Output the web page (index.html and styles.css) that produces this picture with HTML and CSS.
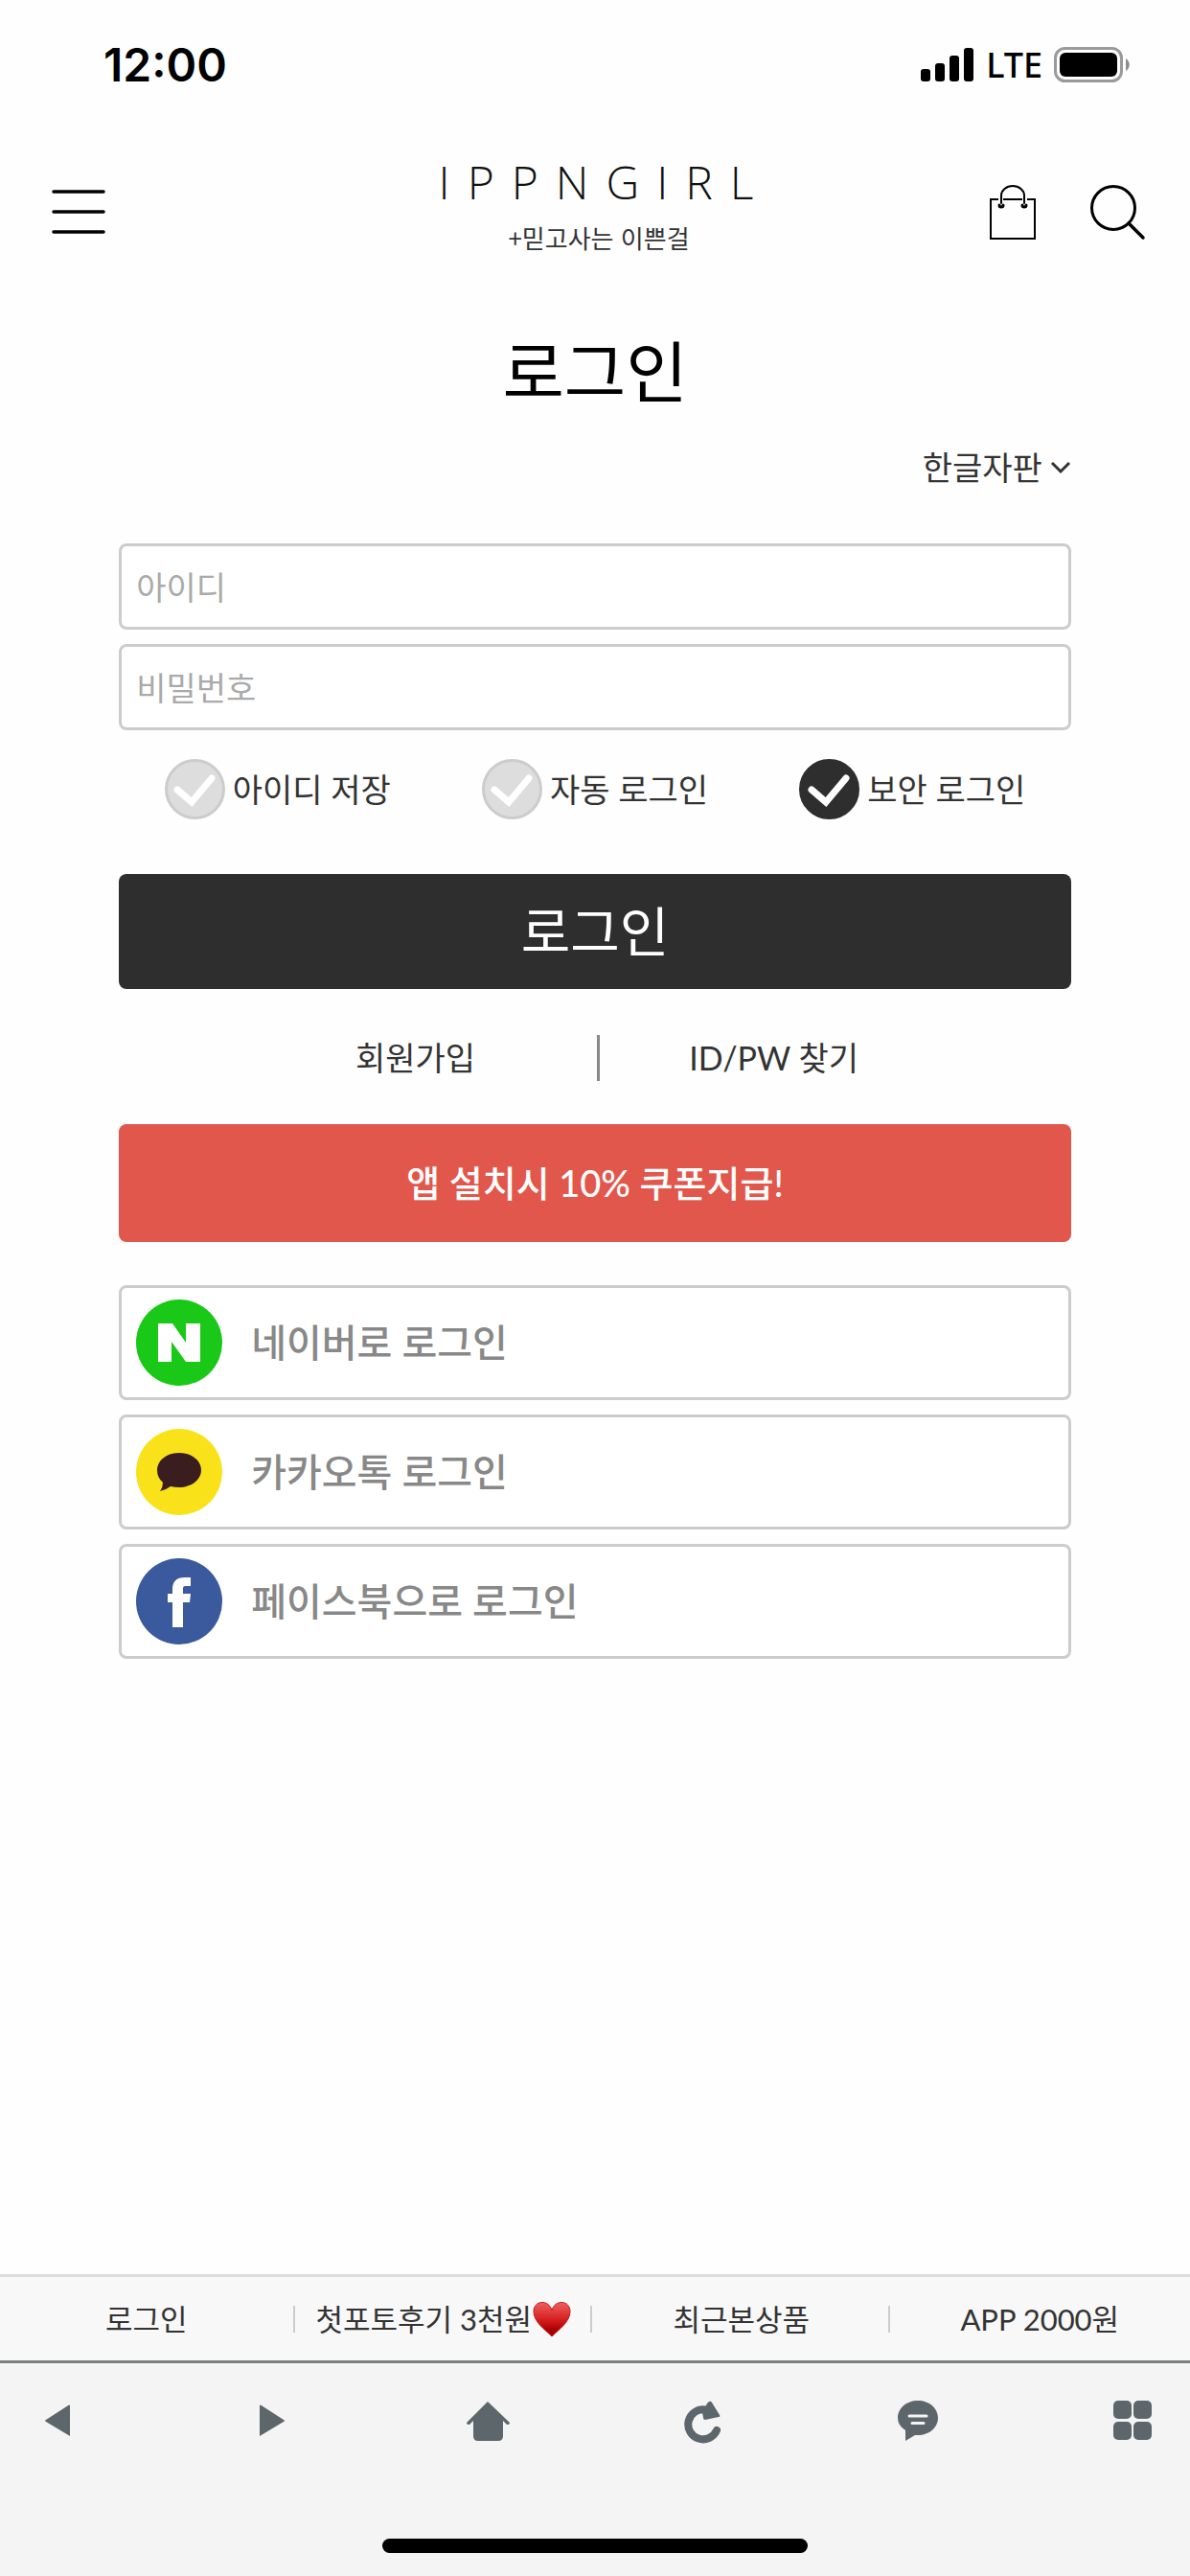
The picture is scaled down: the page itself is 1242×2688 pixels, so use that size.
FILE: index.html
```html
<!DOCTYPE html>
<html lang="ko">
<head>
  <meta charset="UTF-8">
  <meta name="viewport" content="width=device-width, initial-scale=1.0">
  <title>로그인</title>
  <link rel="stylesheet" href="styles.css">
</head>
<body>
  <div class="status-bar">
    <span class="clock">12:00</span>
    <div class="status-icons">
      <svg class="signal" width="56" height="36" viewBox="0 0 56 36" aria-hidden="true">
        <rect x="0" y="22" width="10" height="13" rx="3"/>
        <rect x="15" y="16" width="10" height="19" rx="3"/>
        <rect x="30" y="8" width="10" height="27" rx="3"/>
        <rect x="45" y="0" width="10" height="35" rx="3"/>
      </svg>
      <span class="network">LTE</span>
      <svg class="battery" width="80" height="38" viewBox="0 0 80 38" aria-hidden="true">
        <rect x="1.5" y="1.5" width="69" height="34" rx="10" fill="none" stroke="#9a9a9a" stroke-width="3"/>
        <rect x="6" y="6" width="60" height="25" rx="6"/>
        <path d="M75 12c5 3 5 10 0 13z" fill="#8e8e8e"/>
      </svg>
    </div>
  </div>

  <header class="header">
    <button class="icon-btn" type="button" aria-label="메뉴">
      <svg width="56" height="48" viewBox="0 0 56 48">
        <path d="M2 3h52M2 24h52M2 45h52" fill="none" stroke="#000" stroke-width="3.5" stroke-linecap="round"/>
      </svg>
    </button>
    <a class="logo" href="#">
      <span class="logo-name">IPPNGIRL</span>
      <span class="logo-tag">+믿고사는 이쁜걸</span>
    </a>
    <div class="header-right">
      <a href="#" aria-label="장바구니">
        <svg width="50" height="60" viewBox="0 0 50 60">
          <g fill="none" stroke="#000" stroke-width="2">
            <path d="M10 17H2v41h46V17h-8M15 17h20"/>
            <path d="M13 21V13a12 10 0 0 1 24 0v8" stroke-linecap="round"/>
            <path d="M11 23a2 2 0 0 0 4 0M35 23a2 2 0 0 0 4 0" stroke-width="3" stroke-linecap="round"/>
          </g>
        </svg>
      </a>
      <a href="#" aria-label="검색">
        <svg width="60" height="60" viewBox="0 0 60 60">
          <circle cx="26" cy="26" r="22.500" fill="none" stroke="#000" stroke-width="3"/>
          <path d="M42 42l15 15" fill="none" stroke="#000" stroke-width="3.500" stroke-linecap="round"/>
        </svg>
      </a>
    </div>
  </header>

  <main class="content">
    <h1 class="title">로그인</h1>
    <div class="keyboard-row">
      <button class="keyboard-toggle" type="button">한글자판
        <svg width="22" height="14" viewBox="0 0 22 14" aria-hidden="true">
          <path d="M2 2l9 9 9-9" fill="none" stroke="#333" stroke-width="3"/>
        </svg>
      </button>
    </div>

    <form class="login-form">
      <input class="field" type="text" placeholder="아이디" aria-label="아이디">
      <input class="field" type="password" placeholder="비밀번호" aria-label="비밀번호">

      <div class="options">
        <label class="option">
          <span class="check">
            <input type="checkbox">
            <svg viewBox="0 0 63 63"><path d="M13 32l15 13 21-25" /></svg>
          </span>
          아이디 저장
        </label>
        <label class="option">
          <span class="check">
            <input type="checkbox">
            <svg viewBox="0 0 63 63"><path d="M13 32l15 13 21-25" /></svg>
          </span>
          자동 로그인
        </label>
        <label class="option">
          <span class="check">
            <input type="checkbox" checked>
            <svg viewBox="0 0 63 63"><path d="M13 32l15 13 21-25" /></svg>
          </span>
          보안 로그인
        </label>
      </div>

      <button class="login-btn" type="submit">로그인</button>
    </form>

    <div class="links">
      <a href="#">회원가입</a>
      <a href="#">ID/PW 찾기</a>
    </div>

    <a class="coupon" href="#">앱 설치시 10% 쿠폰지급!</a>

    <div class="social">
      <a class="social-btn" href="#">
        <svg width="90" height="90" viewBox="0 0 90 90" aria-hidden="true">
          <circle cx="45" cy="45" r="45" fill="#1ac818"/>
          <path d="M23 25h15l14 20V25h15v40H52L37 44v21H23z" fill="#fff"/>
        </svg>
        네이버로 로그인
      </a>
      <a class="social-btn" href="#">
        <svg width="90" height="90" viewBox="0 0 90 90" aria-hidden="true">
          <circle cx="45" cy="45" r="45" fill="#fae21b"/>
          <path d="M45 25c13 0 23 8 23 18s-10 18-23 18q-5 0-9-1-5 4-11 5 3-4 3-9-6-5-6-13c0-10 10-18 23-18z" fill="#3a1e1f"/>
        </svg>
        카카오톡 로그인
      </a>
      <a class="social-btn" href="#">
        <svg width="90" height="90" viewBox="0 0 90 90" aria-hidden="true">
          <circle cx="45" cy="45" r="45" fill="#3b5a9d"/>
          <path d="M38 72V46h-5v-9h5v-4c0-9 4-13 13-13h6v9h-5c-3 0-3 1-3 4v4h8l-1 9h-7v26z" fill="#fff"/>
        </svg>
        페이스북으로 로그인
      </a>
    </div>
  </main>

  <nav class="quick-menu">
    <a href="#">로그인</a>
    <a href="#">첫포토후기 3천원
      <svg width="42" height="40" viewBox="0 0 42 40" aria-hidden="true">
        <defs>
          <linearGradient id="heart" x1="0" y1="0" x2="0" y2="1">
            <stop offset="0" stop-color="#ef6060"/>
            <stop offset="0.500" stop-color="#d62020"/>
            <stop offset="0.800" stop-color="#ad0000"/>
          </linearGradient>
        </defs>
        <path d="M21 38C14 31 2 23 2 12 2 0 18-1 21 11 24-1 40 0 40 12c0 11-12 19-19 26z" fill="url(#heart)" stroke="#c01a1a"/>
      </svg>
    </a>
    <a href="#">최근본상품</a>
    <a href="#">APP 2000원</a>
  </nav>

  <footer class="toolbar">
    <div class="toolbar-buttons">
      <button class="icon-btn" type="button" aria-label="뒤로">
        <svg width="48" height="48" viewBox="0 0 48 48"><path d="M37 8v32L12 25q-2-1 0-2L36 7.500z"/></svg>
      </button>
      <button class="icon-btn" type="button" aria-label="앞으로">
        <svg width="48" height="48" viewBox="0 0 48 48"><path d="M11 8v32l25-15q2-1 0-2L12 7.500z"/></svg>
      </button>
      <button class="icon-btn" type="button" aria-label="홈">
        <svg width="48" height="48" viewBox="0 0 48 48"><path d="M24 4L2 26q0 2 3 2l4-4v16q0 5 5 5h21q5 0 5-5V24l4 4q3 0 3-2z"/></svg>
      </button>
      <button class="icon-btn" type="button" aria-label="새로고침">
        <svg width="48" height="48" viewBox="0 0 48 48">
          <path d="M27 12.500A15.500 15.500 0 1 0 39 34" fill="none" stroke="#5c666b" stroke-width="8" stroke-linecap="round"/>
          <path d="M29 6q3-4 5-1l8 13q1 2-1 2l-14 3q-2 0-2-2l-1-6z"/>
        </svg>
      </button>
      <button class="icon-btn" type="button" aria-label="채팅">
        <svg width="48" height="48" viewBox="0 0 48 48">
          <path d="M24 3c12 0 21 8 21 18s-9 18-21 18h-3l-10 6V34q-8-5-8-13C3 11 12 3 24 3z"/>
          <path d="M15 19h18M18 26.500h12" stroke="#f4f4f4" stroke-width="3" stroke-linecap="round"/>
        </svg>
      </button>
      <button class="icon-btn" type="button" aria-label="전체메뉴">
        <svg width="48" height="48" viewBox="0 0 48 48">
          <rect x="4" y="3" width="19" height="19" rx="5"/>
          <rect x="25" y="3" width="19" height="19" rx="5"/>
          <rect x="4" y="25" width="19" height="19" rx="5"/>
          <rect x="25" y="25" width="19" height="19" rx="5"/>
        </svg>
      </button>
    </div>
    <div class="home-indicator"></div>
  </footer>
</body>
</html>
```
FILE: styles.css
```css
* {
  box-sizing: border-box;
}
body {
  margin: 0;
  min-height: 100vh;
  display: flex;
  flex-direction: column;
  background: #fefefe;
  color: #333;
  font-family: Lato, "Noto Sans CJK KR", sans-serif;
  font-size: 34px;
  line-height: 48px;
}
a {
  color: inherit;
  text-decoration: none;
}
button, input {
  font: inherit;
  color: inherit;
}
svg {
  display: block;
  flex: none;
}
.icon-btn {
  padding: 0;
  border: none;
  background: none;
  cursor: pointer;
}

/* phone status bar */
.status-bar {
  height: 136px;
  padding: 0 62px 0 108px;
  display: flex;
  align-items: center;
  justify-content: space-between;
  color: #000;
}
.clock {
  font-family: Inter, sans-serif;
  font-size: 48px;
  font-weight: 600;
}
.status-icons {
  display: flex;
  align-items: center;
  gap: 12px;
}
.network {
  font-family: "Noto Sans", sans-serif;
  font-size: 36px;
  font-weight: 500;
}

.header {
  height: 170px;
  padding: 0 46px 0 54px;
  display: grid;
  grid-template-columns: 1fr auto 1fr;
  align-items: center;
}
.header > .icon-btn {
  justify-self: start;
}
.logo {
  display: flex;
  flex-direction: column;
  align-items: center;
  gap: 16px;
  padding-bottom: 10px;
}
.logo-name {
  padding-left: 12px;
  color: #111;
  font-family: "Open Sans", sans-serif;
  font-size: 48px;
  font-weight: 300;
  letter-spacing: 18px;
}
.logo-tag {
  font-family: "Noto Sans CJK KR", sans-serif;
  font-size: 26px;
  line-height: 36px;
}
.header-right {
  display: flex;
  justify-content: flex-end;
  gap: 54px;
}

.content {
  flex: 1;
  padding: 0 10%;
}
.title {
  margin: 30px 0 24px;
  color: #000;
  font-size: 70px;
  font-weight: 400;
  line-height: 104px;
  text-align: center;
}
.keyboard-row {
  display: flex;
  justify-content: flex-end;
  margin-bottom: 55px;
}
.keyboard-toggle {
  display: flex;
  align-items: center;
  gap: 8px;
  padding: 0;
  border: none;
  background: none;
}

.login-form {
  display: flex;
  flex-direction: column;
  gap: 15px;
}
.field {
  height: 90px;
  padding: 0 15px;
  border: 3px solid #ccc;
  border-radius: 8px;
  background: #fff;
}
.field::placeholder {
  color: #aaa;
  opacity: 1;
}
.options {
  display: grid;
  grid-template-columns: repeat(3, 1fr);
  margin: 15px 0 42px;
}
.option {
  display: flex;
  align-items: center;
  justify-content: center;
  gap: 8px;
}
.check {
  display: grid;
  width: 63px;
  height: 63px;
}
.check input,
.check svg {
  grid-area: 1 / 1;
  width: 63px;
  height: 63px;
}
.check input {
  margin: 0;
  appearance: none;
  border: 3px solid #ccc;
  border-radius: 50%;
  background: #ddd;
}
.check input:checked {
  border-color: #2e2e2e;
  background: #2e2e2e;
}
.check svg {
  fill: none;
  stroke: #fff;
  stroke-width: 7;
  stroke-linecap: round;
  pointer-events: none;
}
.login-btn {
  height: 120px;
  border: none;
  border-radius: 8px;
  background: #2e2e2e;
  color: #fff;
  font-size: 56px;
}

.links {
  display: grid;
  grid-template-columns: 51% 49%;
  margin: 48px 13% 45px 12%;
  text-align: center;
}
.links a + a {
  border-left: 3px solid #888;
}
.coupon {
  display: block;
  border-radius: 8px;
  background: #e2574c;
  color: #fff;
  font-size: 38px;
  font-weight: 500;
  line-height: 123px;
  text-align: center;
}

.social {
  display: flex;
  flex-direction: column;
  gap: 15px;
  margin: 45px 0;
}
.social-btn {
  height: 120px;
  padding: 0 15px;
  display: flex;
  align-items: center;
  gap: 30px;
  border: 3px solid #ccc;
  border-radius: 8px;
  background: #fff;
  color: #888;
  font-size: 40px;
  font-weight: 500;
}

/* bottom */
.quick-menu {
  height: 90px;
  display: grid;
  grid-template-columns: repeat(4, 1fr);
  align-items: center;
  border-top: 3px solid #ddd;
  background: #f8f8f8;
  font-size: 31px;
  line-height: 28px;
}
.quick-menu a {
  display: flex;
  align-items: center;
  justify-content: center;
  height: 28px;
  margin-right: 3px;
}
.quick-menu a:not(:last-child) {
  border-right: 2px solid #ccc;
}
.toolbar {
  padding: 36px 36px 24px;
  border-top: 3px solid #7c8080;
  background: #f4f4f4;
}
.toolbar-buttons {
  display: flex;
  justify-content: space-between;
  margin-bottom: 99px;
}
.toolbar svg {
  fill: #5c666b;
}
.home-indicator {
  width: 38%;
  height: 15px;
  margin: 0 auto;
  border-radius: 8px;
  background: #000;
}
```
